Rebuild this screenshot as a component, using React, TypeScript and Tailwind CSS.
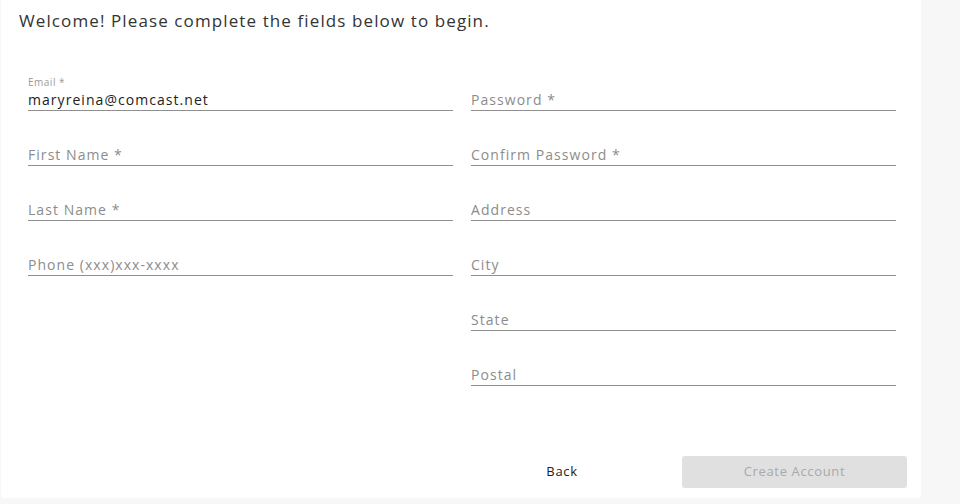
import React from "react";

const font = { fontFamily: '"Open Sans", "Liberation Sans", sans-serif' };

type FieldProps = {
  placeholder: string;
  label?: string;
  value?: string;
  type?: string;
};

function Field({ placeholder, label, value, type = "text" }: FieldProps) {
  return (
    <div className="h-[55px] flex flex-col justify-end">
      {label && (
        <span className="text-[10px] leading-[12px] tracking-[0.05em] text-[#9a9a9a] mb-[1px]">{label}</span>
      )}
      <input
        type={type}
        defaultValue={value}
        placeholder={label ? "" : placeholder}
        className="h-[22px] w-full border-b border-[#8f8f8f] bg-transparent text-[14px] tracking-[0.075em] text-[#222] placeholder:text-[#8c8c8c] outline-none"
      />
    </div>
  );
}

export default function App() {
  return (
    <div className="w-[960px] h-[504px] bg-[#f7f7f7] overflow-hidden" style={font}>
      <div className="ml-[1px] w-[920px] h-[498px] bg-white rounded-b-[4px] flex flex-col">
        <h1 className="pl-[18px] pt-[9px] text-[17px] leading-[24px] tracking-[0.065em] text-[#333] font-normal">
          Welcome! Please complete the fields below to begin.
        </h1>

        <div className="mt-[23px] pl-[27px] grid grid-cols-[425px_425px] gap-x-[18px]">
          <div className="flex flex-col">
            <Field placeholder="Email *" label="Email *" value="maryreina@comcast.net" />
            <Field placeholder="First Name *" />
            <Field placeholder="Last Name *" />
            <Field placeholder="Phone (xxx)xxx-xxxx" />
          </div>
          <div className="flex flex-col">
            <Field placeholder="Password *" type="password" />
            <Field placeholder="Confirm Password *" type="password" />
            <Field placeholder="Address" />
            <Field placeholder="City" />
            <Field placeholder="State" />
            <Field placeholder="Postal" />
          </div>
        </div>

        <div className="mt-auto mb-[10px] flex justify-end pr-[14px]">
          <button className="w-[240px] h-[32px] text-[13px] tracking-[0.05em] text-[#222]">Back</button>
          <button className="w-[225px] h-[32px] rounded-[3px] bg-[#e0e0e0] text-[13px] tracking-[0.05em] text-[#a9a9a9]">
            Create Account
          </button>
        </div>
      </div>
    </div>
  );
}
